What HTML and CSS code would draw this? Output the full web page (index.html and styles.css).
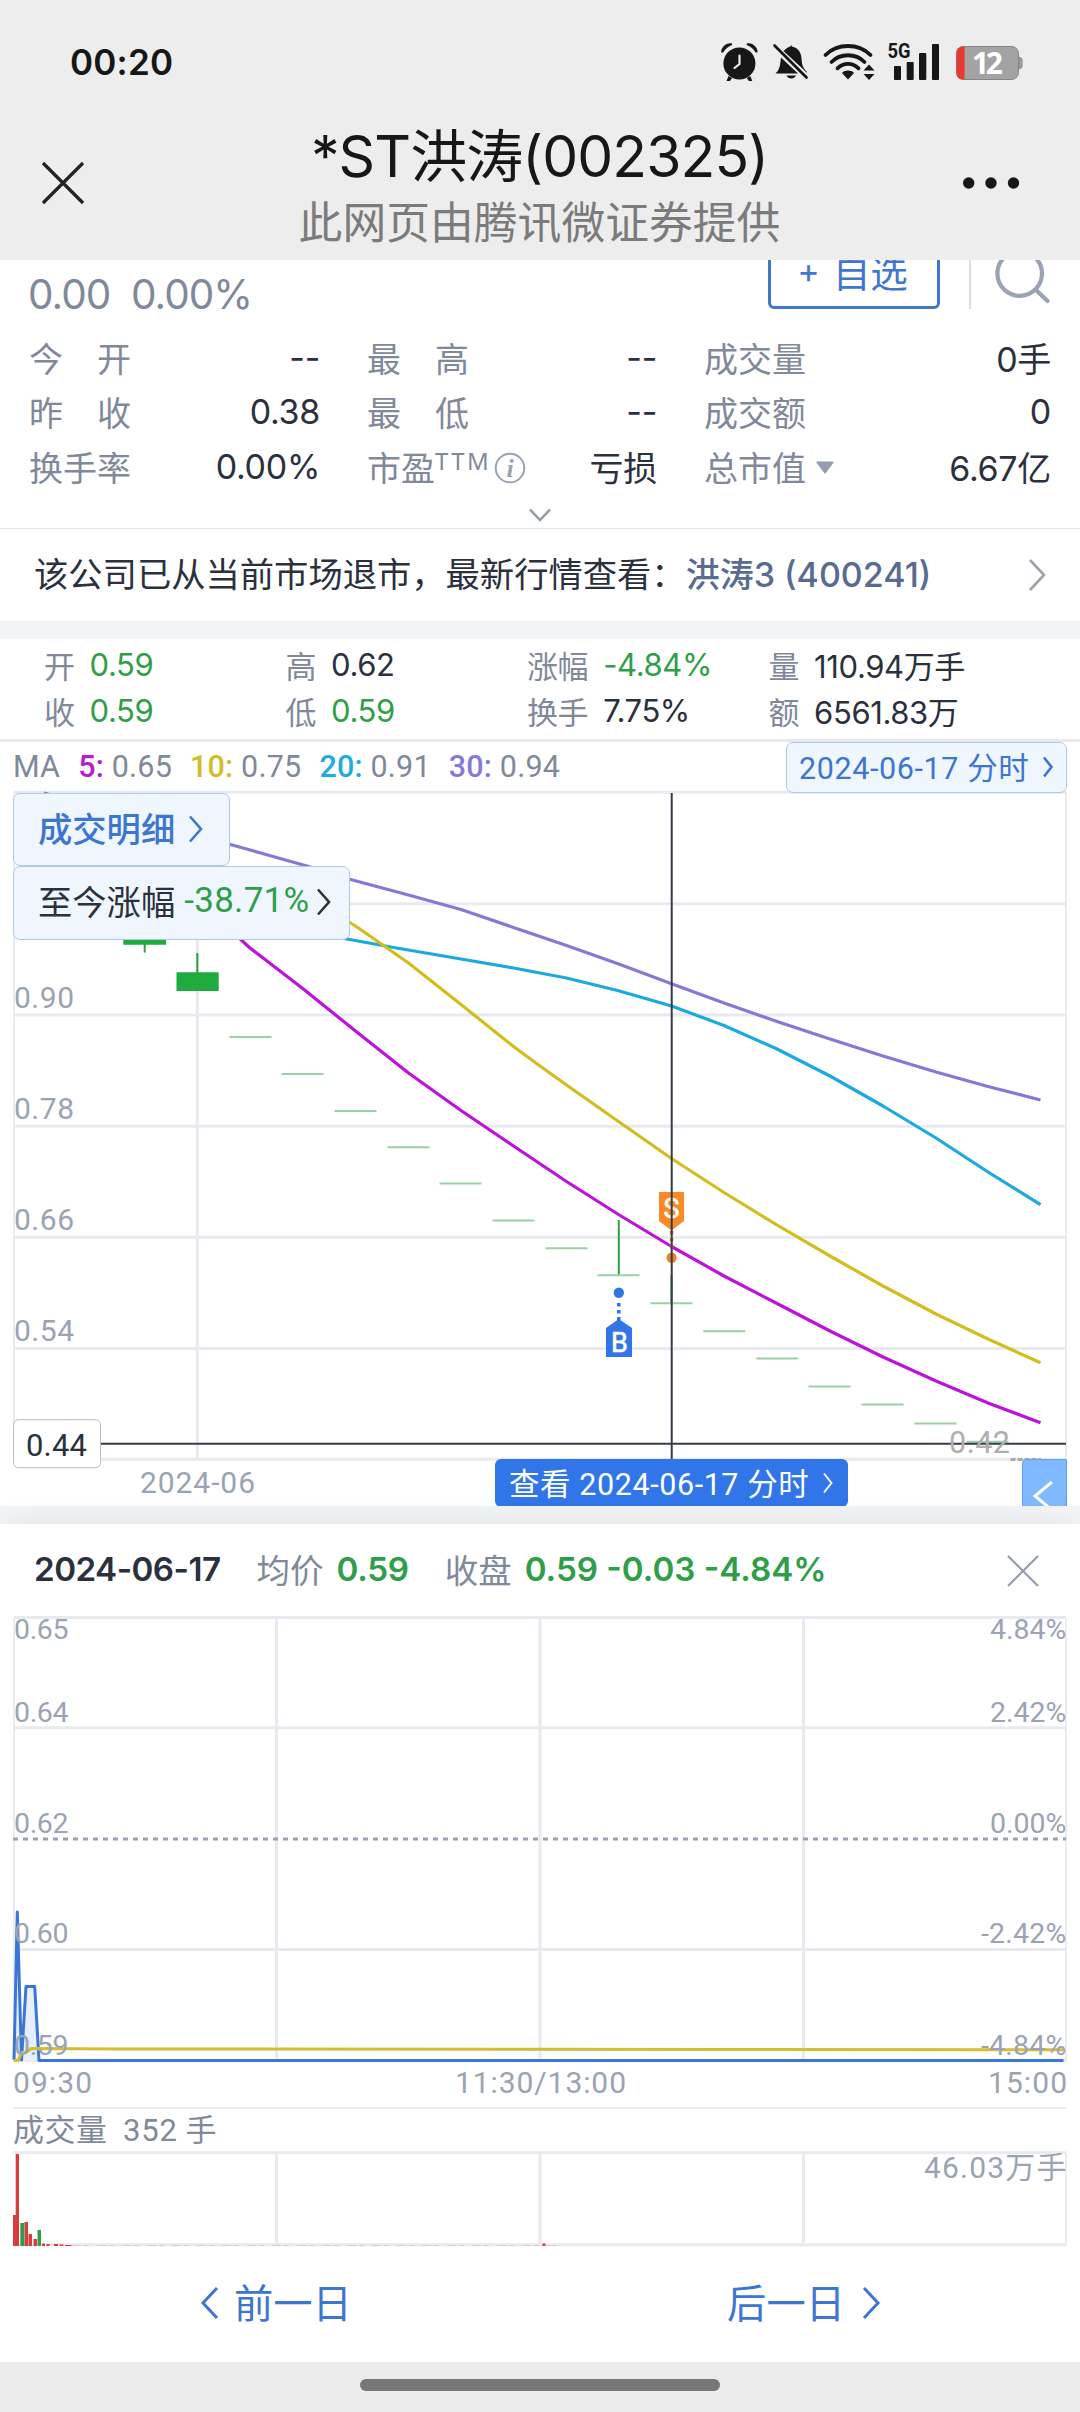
FILE: index.html
```html
<!DOCTYPE html>
<html lang="zh-CN">
<head>
<meta charset="utf-8">
<title>*ST洪涛(002325)</title>
<link rel="stylesheet" href="styles.css">
</head>
<body>
<div class="phone">
  <header class="topbar">
    <div class="status">
      <span class="clock">00:20</span>
      <svg class="status-icons" viewBox="716 38 310 48" width="310" height="48">
        <g fill="#171717">
          <circle cx="739.4" cy="63.4" r="16"/>
          <path d="M721.3 52.5c-.8-5 5-10.300 10.500-9.200l.4 1.700c-4 1.500-7 4-9 7.500zM757.500 52.500c.8-5-5-10.300-10.500-9.200l-.4 1.700c4 1.500 7 4 9 7.500z"/>
          <path d="M728.500 76l3.500 2-2 3h-3.500zM750.300 76l-3.500 2 2 3h3.500z"/>
          <path d="M775.500 73.500c5-5 4.500-9 5.500-16L798 73.500zM783.500 51c2-2.500 5-4.200 7-4.600l.6-1.600.8 1.600c7 1.500 9.600 7 9.700 13 .1 5 1.500 9 5 12l.6 1.600z"/>
          <path d="M786.500 75.500h9.500c-1.500 4-8 4-9.500 0z"/>
          <path d="M848 79.500l-6-6.500c3-3.200 9-3.200 12 0z"/>
        </g>
        <path d="M774.500 45.500l32 32" stroke="#171717" stroke-width="2.800" stroke-linecap="round"/>
        <path d="M739.500 55.500v8.500l-5 4" fill="none" stroke="#ededed" stroke-width="2.200" stroke-linecap="round"/>
        <g fill="none" stroke="#171717" stroke-width="3.800" stroke-linecap="round">
          <path d="M825.500 55c12-12 33-12 45 0M831.500 62c9-9 24-9 33 0M837.500 68.300c6-6 15-6 21 0"/>
        </g>
        <path d="M863.500 70.500l5.500-6 5.500 6zM863.500 74l5.500 6 5.500-6z" fill="#171717"/>
        <text x="887.500" y="58" class="net" textLength="23" lengthAdjust="spacingAndGlyphs">5G</text>
        <g fill="#171717"><rect x="894" y="66" width="7" height="14" rx="1"/><rect x="906.700" y="62" width="7" height="18" rx="1"/><rect x="919" y="53" width="7.300" height="27" rx="1"/><rect x="932" y="44" width="7" height="36" rx="1"/></g>
        <rect x="956.500" y="46.500" width="62" height="33" rx="7" fill="#a3a3a3" stroke="#858585"/>
        <path d="M1019 57.500c2.500 0 3 1 3 2.500v6c0 1.500-.5 2.500-3 2.500z" fill="#a3a3a3" stroke="#858585"/>
        <path d="M964.500 46.500v33h-2a6 6 0 0 1-6-6v-21a6 6 0 0 1 6-6z" fill="#e83a30"/>
        <text x="972" y="74" class="battery" textLength="31">12</text>
      </svg>
    </div>
    <nav class="nav">
      <svg width="48" height="48" viewBox="0 0 48 48"><path d="M4 4l40 40M44 4L4 44" fill="none" stroke="#222" stroke-width="3.200"/></svg>
      <div class="heading">
        <h1>*ST洪涛(002325)</h1>
        <p>此网页由腾讯微证券提供</p>
      </div>
      <svg width="60" height="48" viewBox="0 0 60 48" fill="#171717"><circle cx="7.700" cy="24" r="5.700"/><circle cx="30" cy="24" r="5.700"/><circle cx="52.500" cy="24" r="5.700"/></svg>
    </nav>
  </header>

  <section class="quote">
    <div class="quote-top">
      <span class="change">0.00&nbsp;&nbsp;0.00%</span>
      <div class="actions">
        <button class="add"><span>+</span>自选</button>
        <i class="bar"></i>
        <svg width="60" height="60" viewBox="990 249 60 60" fill="none" stroke="#9aa3b4" stroke-width="4.200" stroke-linecap="round"><circle cx="1019.700" cy="273.500" r="22.300"/><path d="M1036 290l11.500 11"/></svg>
      </div>
    </div>
    <div class="stats">
      <div class="stat"><span class="sp">今<b></b>开</span><em>--</em></div>
      <div class="stat"><span class="sp">最<b></b>高</span><em>--</em></div>
      <div class="stat"><span>成交量</span><em>0手</em></div>
      <div class="stat"><span class="sp">昨<b></b>收</span><em>0.38</em></div>
      <div class="stat"><span class="sp">最<b></b>低</span><em>--</em></div>
      <div class="stat"><span>成交额</span><em>0</em></div>
      <div class="stat"><span>换手率</span><em>0.00%</em></div>
      <div class="stat"><span class="pe">市盈<small>TTM</small><svg width="32" height="32" viewBox="0 0 32 32"><circle cx="16" cy="16" r="14.300" fill="none" stroke="#9aa3b4" stroke-width="2"/><text x="16" y="24.500" text-anchor="middle" class="info">i</text></svg></span><em>亏损</em></div>
      <div class="stat"><span class="cap">总市值<svg width="18" height="13" viewBox="0 0 18 13"><path d="M1.500.5h15a1 1 0 0 1 .8 1.600l-7.500 9.900a1 1 0 0 1-1.600 0L.7 2.100A1 1 0 0 1 1.500.5z" fill="#949db3"/></svg></span><em>6.67亿</em></div>
    </div>
    <svg class="more" width="26" height="16" viewBox="0 0 26 16"><path d="M3 2.500l10 10.500L23 2.500" fill="none" stroke="#8f98a9" stroke-width="2.500"/></svg>
  </section>

  <section class="notice">
    <p>该公司已从当前市场退市，最新行情查看：<strong>洪涛3 (400241)</strong></p>
    <svg width="20" height="34" viewBox="0 0 20 34"><path d="M3 2l14 15L3 32" fill="none" stroke="#9ca3b0" stroke-width="2.600"/></svg>
  </section>

  <section class="ohlc">
    <div><span>开</span><em class="g">0.59</em></div>
    <div><span>高</span><em>0.62</em></div>
    <div><span>涨幅</span><em class="g">-4.84%</em></div>
    <div><span>量</span><em>110.94万手</em></div>
    <div><span>收</span><em class="g">0.59</em></div>
    <div><span>低</span><em class="g">0.59</em></div>
    <div><span>换手</span><em>7.75%</em></div>
    <div><span>额</span><em>6561.83万</em></div>
  </section>

  <section class="kline">
    <svg class="chart" width="1080" height="764" viewBox="0 742 1080 764">
      <g class="grid">
        <path d="M14 792.300H1066M14 903.700H1066M14 1015H1066M14 1126.200H1066M14 1237.300H1066M14 1348.500H1066M14 1459.300H1066M197.300 792V1459"/>
        <path class="thin" d="M14 792V1459M1066 792V1459"/>
      </g>
      <g class="axis">
        <text x="14" y="1008" textLength="60">0.90</text>
        <text x="14" y="1119" textLength="60">0.78</text>
        <text x="14" y="1230" textLength="60">0.66</text>
        <text x="14" y="1341" textLength="60">0.54</text>
        <text x="140" y="1492.500" textLength="115">2024-06</text>
      </g>
      <path d="M123.300 925H166V944.700H123.300zM176.500 972.300H218.700V991H176.500z" fill="#1fab3e"/>
      <path d="M144.700 944V952.500M197.300 953V973M618.800 1220V1275M671.500 1275V1303" stroke="#319c49" stroke-width="2"/>
      <path class="flat" d="M229.500 1037h42M281.500 1074h42M334.500 1111h42M387.500 1147.300h42M439.500 1183.500h42M492.500 1220.500h42M545.500 1248.300h42M597.500 1275.300h42M650.500 1303.300h42M703.300 1331.300h42M756.300 1358.500h42M808.500 1386.500h42M861.500 1404.500h42M914.500 1423.500h42M966.500 1441.700h42M1022 1460.500h40"/>
      <g class="ma">
        <path stroke="#8579d8" d="M44 793L145 821L229.500 844.300L306 865.700L349.600 879.300L408.500 895L461 909.500L513.500 927.500L566.500 945.500L618.800 964L671.500 983.700L724 1003L777 1021.500L830 1039L883 1056L936 1072L988 1086.500L1040.500 1100"/>
        <path stroke="#1ba9e2" d="M340 937.800L393.600 947.500L461 959L513.500 968L566.500 978L618.500 990.700L671.500 1006L724 1025.500L777 1049L830 1076L883 1106L936 1138L988 1172L1040.500 1204.700"/>
        <path stroke="#d3bd1c" d="M345 919.500L357 927L408.500 963L461 1004.500L513.500 1046.500L540 1066L566.500 1085L618.500 1121.500L671.500 1158.500L724 1192.500L777 1225L830 1256L883 1286L936 1314L988 1339L1040.500 1362.700"/>
        <path stroke="#be12da" d="M238 937L250 948L302.700 988.500L355.500 1031L408.500 1073L461 1110.500L513.500 1146L566.500 1181.500L618.500 1214.500L671.500 1246.500L724 1276L777 1303.500L830 1331L883 1357L936 1381L988 1403L1040.500 1422.700"/>
      </g>
      <path d="M659 1192H684V1221L671.600 1230.500L659 1221z" fill="#fb8a24"/>
      <text x="671.600" y="1218" class="mark">S</text>
      <path d="M671.600 1231V1251" stroke="#d87c35" stroke-width="3.500" stroke-dasharray="3.500 3.500"/>
      <circle cx="671.600" cy="1257.700" r="5.200" fill="#e88434"/>
      <path d="M606 1357H632V1328L618.800 1319L606 1328z" fill="#3076ea"/>
      <text x="619.400" y="1351.500" class="mark">B</text>
      <path d="M618.800 1303V1321" stroke="#3076dc" stroke-width="3.500" stroke-dasharray="3.500 3.500"/>
      <circle cx="618.800" cy="1292.700" r="5.200" fill="#3076dc"/>
      <path d="M671.700 793V1459M101 1443.700H1066" stroke="#343c4b" stroke-width="2" fill="none"/>
      <text x="949" y="1452.500" textLength="61" class="low">0.42</text>
      <path d="M1010.500 1459.500H1041" stroke="#a9aaad" stroke-width="3" stroke-dasharray="5 2"/>
      <rect x="13.500" y="1419.700" width="87" height="48" rx="5" fill="#fff" stroke="#b8bec8"/>
      <text x="26" y="1456" textLength="61" class="cursor">0.44</text>
    </svg>
    <div class="ma-row">
      <div class="legend"><span class="l0">MA</span><span class="l1"><b>5:</b> 0.65</span><span class="l2"><b>10:</b> 0.75</span><span class="l3"><b>20:</b> 0.91</span><span class="l4"><b>30:</b> 0.94</span></div>
      <button class="tag day">2024-06-17 分时<svg width="12" height="22" viewBox="0 0 12 22"><path d="M2 1.500L9.500 11L2 20.500"/></svg></button>
    </div>
    <button class="tag detail">成交明细<svg width="16" height="28" viewBox="0 0 16 28"><path d="M2 1.500L13 14L2 26.500"/></svg></button>
    <button class="tag since">至今涨幅<em>-38.71%</em><svg width="16" height="28" viewBox="0 0 16 28"><path d="M2 1.500L13 14L2 26.500"/></svg></button>
    <button class="view">查看 2024-06-17 分时<svg width="12" height="22" viewBox="0 0 12 22"><path d="M2 1.500L9.500 11L2 20.500"/></svg></button>
    <button class="back"><svg width="44" height="47" viewBox="0 0 44 47"><path d="M29 22L12 36L29 50" fill="none" stroke="#fff" stroke-width="3"/></svg></button>
  </section>

  <div class="gap"></div>

  <section class="intraday">
    <div class="day-head">
      <b class="date">2024-06-17</b><span>均价</span><b>0.59</b><span>收盘</span><b class="close">0.59 -0.03 -4.84%</b>
      <svg width="34" height="34" viewBox="0 0 34 34"><path d="M2 2l30 30M32 2L2 32" fill="none" stroke="#949cae" stroke-width="2.200"/></svg>
    </div>
    <svg class="day-chart" width="1080" height="644" viewBox="0 1611 1080 644">
      <g class="grid">
        <path d="M14 1617.500H1066M14 1727.800H1066M14 1949.600H1066M14 2060.500H1066M276.500 1618V2060M540 1618V2060M803.500 1618V2060"/>
        <path class="thin" d="M14 1618V2060M1066 1618V2060M13 2108.200H1066M1066 2153V2245"/>
        <path d="M13 2152.700H1066M13 2244.700H1066M276.500 2153V2245M540 2153V2245M803.500 2153V2245"/>
      </g>
      <path d="M13 1839H1066" stroke="#9aa1b2" stroke-width="2.800" stroke-dasharray="5 5"/>
      <path d="M14 2060L17.300 1912L21.500 2060L26 1986.500H34.700L39 2060.500z" fill="#e6effd"/>
      <path d="M14 2060L17.300 1912L21.500 2060L26 1986.500H34.700L39 2060.500H1063.500" fill="none" stroke="#3a76d8" stroke-width="3" stroke-linejoin="round"/>
      <path d="M13.500 2060.500H18L22 2052.500L26.500 2052L31.500 2048.500L116 2049L1063.500 2049.700" fill="none" stroke="#d3bd32" stroke-width="3"/>
      <g class="axis day">
        <text x="14" y="1639.300" textLength="55">0.65</text>
        <text x="14" y="1721.500" textLength="55">0.64</text>
        <text x="14" y="1832.700" textLength="55">0.62</text>
        <text x="14" y="1943.300" textLength="55">0.60</text>
        <text x="14" y="2054.500" textLength="55">0.59</text>
        <text x="990" y="1639.300" textLength="77">4.84%</text>
        <text x="990" y="1721.500" textLength="77">2.42%</text>
        <text x="990" y="1832.700" textLength="77">0.00%</text>
        <text x="981" y="1943.300" textLength="86">-2.42%</text>
        <text x="981" y="2054.500" textLength="86">-4.84%</text>
      </g>
      <g class="axis">
        <text x="13" y="2093.300" textLength="79">09:30</text>
        <text x="455" y="2093.300" textLength="171">11:30/13:00</text>
        <text x="988" y="2093.300" textLength="79">15:00</text>
        <text x="924" y="2178" textLength="142.500">46.03万手</text>
      </g>
      <g class="volume"><text x="13" y="2140.500" textLength="94">成交量</text><text x="123" y="2140.500" textLength="54">352</text><text x="185.500" y="2140.500">手</text></g>
      <path d="M13 2215h3v31h-3zM15.700 2154h3.300v92h-3.300zM24.500 2222h3.500v24h-3.500zM28.500 2234h3.500v12h-3.500zM33.500 2239h3.500v7h-3.500zM42 2243.500h3v2.500h-3zM46.500 2244h3v2h-3zM54 2244h4v2h-4zM59.500 2244.500h4v1.500h-4zM65 2245h6.500v1h-6.500zM542.500 2243.500h3v2.500h-3z" fill="#d83c3c"/>
      <path d="M20.300 2223h4v23h-4zM37.500 2230h3.500v16h-3.500z" fill="#319c49"/>
      <path d="M72 2245.500H560" stroke="#dccfce" stroke-width="1" stroke-dasharray="9 3 5 8"/>
    </svg>
    <div class="pager">
      <a><svg width="20" height="34" viewBox="0 0 20 34"><path d="M17 2L3 17L17 32"/></svg><span>前一日</span></a>
      <a><span>后一日</span><svg width="20" height="34" viewBox="0 0 20 34"><path d="M3 2L17 17L3 32"/></svg></a>
    </div>
  </section>
  <footer class="home"><i></i></footer>
</div>
</body>
</html>
```
FILE: styles.css
```css
* { box-sizing: border-box; }
body { margin: 0; background: #fff; font-family: "Inter", "Noto Sans CJK SC", sans-serif; color: #2a303c; }
h1, p { margin: 0; font-weight: 400; }
em { font-style: normal; }
svg { display: block; flex: none; }
button { border: 0; padding: 0; margin: 0; font: inherit; display: flex; align-items: center; }
.phone { width: 1080px; height: 2412px; overflow: hidden; display: flex; flex-direction: column; }

.topbar { height: 260px; flex: none; background: #ededed; color: #171717; }
.status { height: 124px; padding: 0 54px 0 70px; display: flex; justify-content: space-between; align-items: center; }
.clock { font-size: 35px; font-weight: 600; letter-spacing: .200px; padding-bottom: 1px; }
.net { font: 700 21px "Roboto", sans-serif; fill: #171717; }
.battery { font: 700 30px "Open Sans", sans-serif; fill: #fff; }
.nav { height: 118px; padding: 0 59px 0 39px; display: flex; justify-content: space-between; align-items: center; }
.heading { text-align: center; padding: 11px 0 0 31px; white-space: nowrap; }
.heading h1 { font-size: 57px; line-height: 70px; letter-spacing: -.900px; }
.heading p { font-size: 43.800px; line-height: 64px; color: #7b7b7b; }

.quote { height: 269px; flex: none; border-bottom: 1px solid #e3e4e9; overflow: hidden; position: relative; }
.quote-top { height: 70px; display: flex; justify-content: space-between; padding: 0 30px 0 28px; }
.change { font-size: 40.500px; line-height: 70px; color: #7f8999; letter-spacing: -1px; }
.actions { display: flex; height: 49px; align-items: flex-end; }
.add { width: 172px; height: 78px; border: 3px solid #3f76c9; border-radius: 6px; background: #fff; color: #3f76cf; font-size: 37.500px; justify-content: center; gap: 13px; margin-right: 29px; flex: none; padding: 0 3px 0 0; }
.add span { font-size: 34px; }
.bar { width: 2px; height: 49px; background: #dadce0; margin-right: 19px; }
.stats { display: grid; grid-template-columns: 291px 290px 347px; column-gap: 47px; grid-auto-rows: 54.500px; padding: 0 0 0 29px; }
.stat { display: flex; justify-content: space-between; align-items: center; font-size: 34px; }
.stat span { color: #7f8999; font-size: 34px; display: flex; align-items: center; }
.stat em { letter-spacing: -.300px; }
.sp b { width: 34px; }
.pe small { font: 24px "Noto Sans", sans-serif; align-self: flex-start; margin-top: 4px; line-height: 30px; letter-spacing: 2.400px; }
.pe svg { margin: 3px 0 0 3px; }
.info { font: italic 700 26px "Liberation Serif", serif; fill: #9aa3b4; }
.cap svg { margin: 2px 0 0 10px; }
.more { position: absolute; left: 527px; bottom: 5px; }

.notice { height: 92px; flex: none; display: flex; justify-content: space-between; align-items: center; padding: 0 33px 0 34px; }
.notice p { font-size: 34.300px; padding-bottom: 6px; }
.notice strong { font-weight: 500; color: #586b90; font-size: 34px; }

.ohlc { height: 121px; flex: none; border-top: 18px solid #f3f4f8; border-bottom: 3px solid #e8e9ee; display: grid; grid-template-columns: repeat(4, 241.500px); grid-auto-rows: 46px; padding: 2px 0 0 44px; }
.ohlc div { display: flex; align-items: center; gap: 15px; font-size: 31px; letter-spacing: -.400px; white-space: nowrap; }
.ohlc span { color: #7f8999; }
.g { color: #2f9e49; }

.kline { height: 764px; flex: none; position: relative; overflow: hidden; }
.chart { position: absolute; left: 0; top: 0; }
.grid path { fill: none; stroke: #e9eaef; stroke-width: 3; }
.grid .thin { stroke-width: 1.800; }
.axis text, .volume text { font: 30px "Roboto", "Noto Sans CJK SC", sans-serif; fill: #9aa3b3; }
.volume text { font-size: 31px; fill: #7f8999; }
.axis.day text { font-size: 28.500px; }
.flat { stroke: #9bd0a7; stroke-width: 2; }
.ma path { fill: none; stroke-width: 3.200; stroke-linejoin: round; }
.mark { font: 27px "Roboto", sans-serif; fill: #fff; text-anchor: middle; stroke: #fff; stroke-width: .6; }
.low { font: 30.500px "Roboto", sans-serif; fill: #aeaeae; }
.cursor { font: 31px "Roboto", sans-serif; fill: #2a303c; }
.ma-row { position: relative; height: 50px; padding: 0 13px; display: flex; justify-content: space-between; align-items: center; font-family: "Roboto", "Noto Sans CJK SC", sans-serif; font-size: 30.500px; color: #7f8999; }
.legend { display: flex; gap: 18px; padding-bottom: 2px; letter-spacing: .200px; }
.legend b { font-weight: 500; }
.l1 b { color: #b91bd0; } .l2 b { color: #d1bd28; } .l3 b { color: #22aadf; } .l4 b { color: #8579d8; }
.tag { background: #eff6fe; border: 1px solid #b0c8ea; border-radius: 7px; color: #3d76cf; }
.tag path { fill: none; stroke: currentColor; stroke-width: 2.600; }
.day { width: 281px; height: 51px; padding: 0 0 2px 12px; gap: 13px; font-size: 30.500px; letter-spacing: .600px; white-space: nowrap; }
.detail { position: absolute; left: 13px; top: 50.500px; width: 217px; height: 73.500px; padding: 0 0 5px 24px; gap: 13px; font-size: 34.300px; font-weight: 500; }
.since { position: absolute; left: 13px; top: 123.500px; width: 337px; height: 74px; padding: 0 0 6px 24px; font-size: 34.300px; color: #2a303c; white-space: nowrap; }
.detail svg, .since svg { margin-top: 4px; }
.since em { font-family: "Roboto", sans-serif; font-size: 35px; letter-spacing: .300px; color: #2f9e49; margin: 2px 6px 0 9px; }
.view { position: absolute; left: 495px; top: 717px; width: 353px; height: 48px; border-radius: 6px; background: #3076e8; color: #fff; padding: 0 0 3px 14px; gap: 13px; font: 30.500px "Roboto", "Noto Sans CJK SC", sans-serif; letter-spacing: .580px; white-space: nowrap; }
.view svg, .day svg { margin-top: 2px; }
.view path { fill: none; stroke: #fff; stroke-width: 2; }
.back { position: absolute; left: 1022px; top: 717px; width: 44.500px; height: 48px; background: #80b9ff; border: 1px solid #60a0e8; border-radius: 5px 0 0 0; }

.gap { height: 18px; flex: none; background: #f3f4f8; }
.intraday { height: 838px; flex: none; background: #fff; box-shadow: 0 4px 36px -8px rgba(0, 0, 0, .18); position: relative; }
.day-head { height: 87px; padding: 6px 40px 0 34px; display: flex; align-items: center; font-size: 33.200px; white-space: nowrap; }
.day-head b { font-weight: 600; color: #2f9e49; letter-spacing: -.300px; padding-bottom: 4px; }
.day-head .date { color: #2a303c; letter-spacing: -.550px; }
.day-head .close { letter-spacing: 0; }
.day-head span { font-size: 33.500px; color: #7f8999; margin: 0 13px 0 36px; padding-bottom: 5px; }
.day-head svg { margin-left: auto; }
.pager { display: flex; height: 99px; align-items: center; padding: 0 199px 0 200px; justify-content: space-between; font-size: 39.300px; color: #3d76cf; }
.pager a { display: flex; align-items: center; gap: 14px; padding-bottom: 4px; }
.pager a:last-child { gap: 16px; }
.pager span { padding-bottom: 4px; }
.pager path { fill: none; stroke: currentColor; stroke-width: 3; }
.home { height: 50px; flex: none; background: #ececec; padding-top: 17px; position: relative; }
.home i { display: block; width: 360px; height: 12px; border-radius: 6px; background: #777; margin: 0 auto; }
```
